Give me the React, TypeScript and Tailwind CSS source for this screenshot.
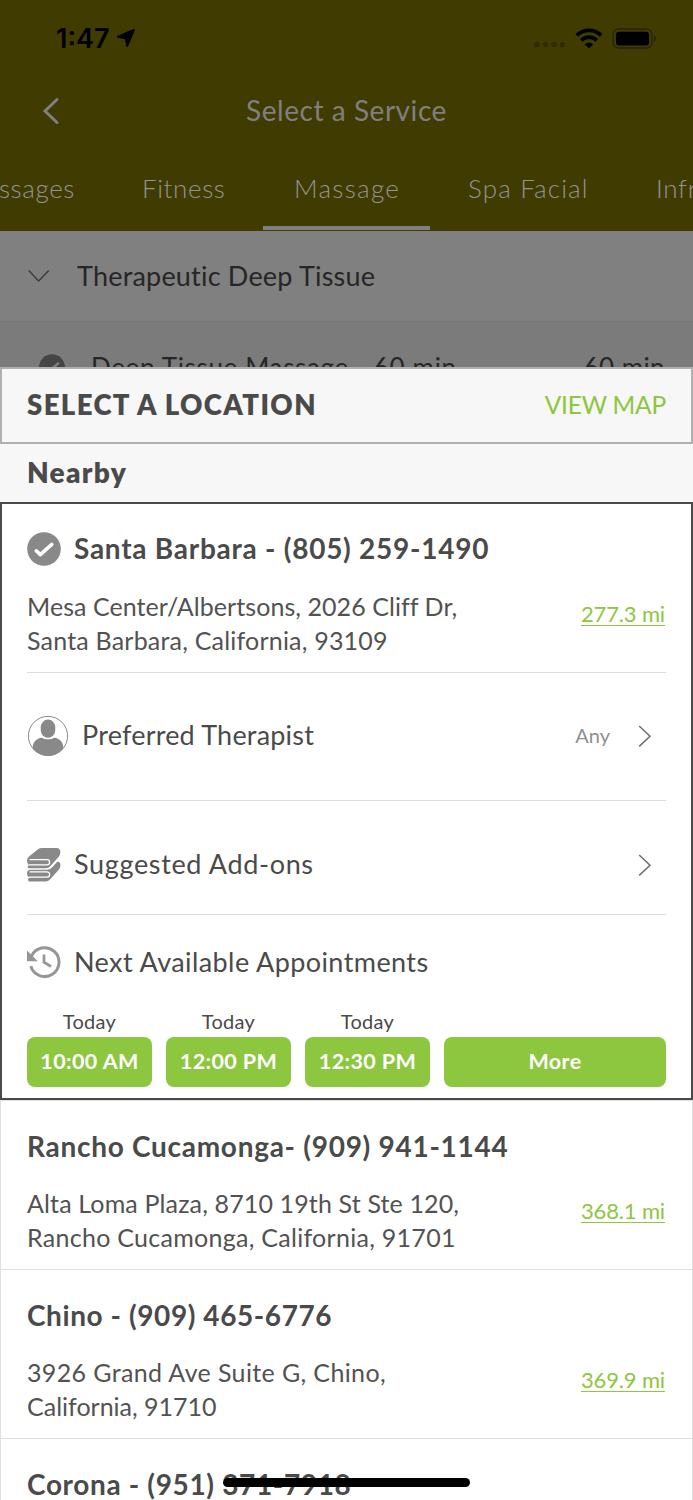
import React from "react";
import clsx from "clsx";

type Location = {
  name: string;
  address: string[];
  distance: string;
  nameClass: string;
  addressClass: string[];
};

const tabs = [
  { label: "Massages", className: "-ml-[38px] w-[113px] tracking-[0.6px]" },
  { label: "Fitness", className: "ml-[67px] w-[84px] tracking-[0.6px]" },
  { label: "Massage", className: "ml-[68px] w-[106px] tracking-[1.3px]" },
  { label: "Spa Facial", className: "ml-[68px] w-[121px] tracking-[1.15px]" },
  { label: "Infrared", className: "ml-[67px] tracking-[0.7px]" },
];

const slots = ["10:00 AM", "12:00 PM", "12:30 PM"];

const locations: Location[] = [
  {
    name: "Rancho Cucamonga- (909) 941-1144",
    address: [
      "Alta Loma Plaza, 8710 19th St Ste 120,",
      "Rancho Cucamonga, California, 91701",
    ],
    distance: "368.1 mi",
    nameClass: "tracking-[0.72px]",
    addressClass: ["tracking-[0.14px]", "tracking-[0.28px]"],
  },
  {
    name: "Chino - (909) 465-6776",
    address: ["3926 Grand Ave Suite G, Chino,", "California, 91710"],
    distance: "369.9 mi",
    nameClass: "tracking-[0.58px]",
    addressClass: ["tracking-[0.37px]", "tracking-[0px]"],
  },
];

const CheckCircle: React.FC<{ className?: string; fill: string; mark: string }> = ({
  className,
  fill,
  mark,
}) => (
  <svg viewBox="0 0 34 34" className={className} fill="none">
    <circle cx="17" cy="17" r="16.8" fill={fill} />
    <path
      d="M9.3 18.8l4 3.8L24.8 12.4"
      stroke={mark}
      strokeWidth="3.6"
      strokeLinecap="round"
      strokeLinejoin="round"
    />
  </svg>
);

const ChevronRight = () => (
  <svg width="14" height="24" viewBox="0 0 14 24" fill="none" className="shrink-0">
    <path d="M1.2 2L12 12.2 1.2 22.4" stroke="#6e6e6e" strokeWidth="1.5" />
  </svg>
);

const PersonIcon = () => (
  <svg width="42" height="42" viewBox="0 0 42 42" className="shrink-0">
    <defs>
      <clipPath id="avatar">
        <circle cx="21" cy="21" r="19.8" />
      </clipPath>
    </defs>
    <circle cx="21" cy="21" r="19.6" fill="none" stroke="#898989" />
    <rect x="13.7" y="4.6" width="14.6" height="18.2" rx="7.2" ry="8" fill="#898989" />
    <path
      clipPath="url(#avatar)"
      d="M5.5 34c0-7 3.800-10.800 9.500-11.300 3.300 2 8.700 2 12 0 5.700.5 9.500 4.300 9.500 11.300v8h-31z"
      fill="#898989"
    />
  </svg>
);

const TowelsIcon = () => (
  <svg width="34" height="34" viewBox="0 0 34 34" fill="none" className="shrink-0">
    <path
      d="M0 12.500Q0 10 2 8.500L11 1.300Q12.600 0 15 0H29.500Q33.500.2 33.400 4.500Q33.200 7 31.500 9L23.500 18Q22 20.200 19 20.300H2Q.6 20.300.6 19T2 17.300Q0 16 0 12.500Z"
      fill="#898989"
    />
    <path
      d="M33 15Q34.500 18.500 31.500 22L23.500 31Q21.800 33.400 19 33.400H2.500Q1 33.400 1 31.800T2.500 29.800Q0 28.500 0 25.500T3 21.800H20Q23.500 21.500 25 19.500L29.500 14.500Q31.500 13 33 15Z"
      fill="#898989"
    />
    <path d="M2.500 11.700H20a2.600 2.600 0 0 1 0 5.200H2" stroke="#fff" strokeWidth="1.300" />
    <path d="M2.500 23.900H20a2.600 2.600 0 0 1 0 5.200H2" stroke="#fff" strokeWidth="1.300" />
  </svg>
);

const HistoryIcon = () => (
  <svg width="34" height="34" viewBox="0 0 34 34" fill="none" className="shrink-0">
    <path d="M3.800 20.200A14.400 14.400 0 1 0 4.500 10.200" stroke="#969696" strokeWidth="3" />
    <path d="M0 4.600V15.200h10.800z" fill="#969696" />
    <path d="M17 8.600v7.600l7 4.300" stroke="#969696" strokeWidth="2.700" />
  </svg>
);

const StatusBar = () => (
  <div className="flex h-[76px] items-center pl-[56px] pr-[36px] text-black">
    <span className="font-[Inter] text-[27px] font-semibold leading-none">1:47</span>
    <svg width="20" height="20" viewBox="0 0 20 20" className="ml-[6px]">
      <path
        d="M2 8.700L17.800 2 11.200 17.800 9.800 10.200z"
        fill="#000"
        stroke="#000"
        strokeWidth="2"
        strokeLinejoin="round"
      />
    </svg>
    <div className="ml-auto flex gap-[3px] pt-[13px]">
      {[0, 1, 2, 3].map((dot) => (
        <span key={dot} className="size-[5.500px] rounded-[2px] bg-[#2f2b00]" />
      ))}
    </div>
    <svg width="28" height="21" viewBox="0 0 28 21" fill="none" className="ml-[10px]">
      <path d="M1.800 7.400a17.300 17.300 0 0 1 24.400 0" stroke="#000" strokeWidth="3.900" />
      <path d="M6.200 12.400a11 11 0 0 1 15.600 0" stroke="#000" strokeWidth="3.700" />
      <path d="M14 20.500l-4.200-4.200a6 6 0 0 1 8.400 0z" fill="#000" />
    </svg>
    <svg width="45" height="21" viewBox="0 0 45 21" fill="none" className="ml-[9px]">
      <rect x="1" y="1" width="39" height="19" rx="5.500" stroke="#262300" strokeWidth="1.300" />
      <rect x="4" y="3.700" width="33" height="13.800" rx="3" fill="#000" />
      <path d="M42 7.300c2.600 1 2.600 5.400 0 6.400z" fill="#262300" />
    </svg>
  </div>
);

const Distance: React.FC<{ children: React.ReactNode }> = ({ children }) => (
  <a className="mr-px mt-[9px] block h-[28px] border-b-[1.500px] border-[#8dc63f] text-[22px] leading-[31px] tracking-[-0.15px] text-[#8dc63f]">
    {children}
  </a>
);

const LocationRow: React.FC<{ location: Location }> = ({ location }) => (
  <div className="h-[169px] border-x border-t border-[#dfdfdf] px-[26px]">
    <h3
      className={clsx(
        "whitespace-nowrap pt-[25px] text-[28px] font-bold leading-[40px]",
        location.nameClass
      )}
    >
      {location.name}
    </h3>
    <div className="mt-[20px] flex justify-between">
      <div className="text-[25px] leading-[34px] text-[#525252]">
        {location.address.map((line, i) => (
          <p key={line} className={clsx("whitespace-nowrap", location.addressClass[i])}>
            {line}
          </p>
        ))}
      </div>
      <Distance>{location.distance}</Distance>
    </div>
  </div>
);

export default function App() {
  return (
    <div className="relative h-[1500px] w-[693px] overflow-hidden bg-white font-[Lato,'Liberation_Sans',sans-serif] text-[#4a4a4a]">
      <header className="h-[231px] overflow-hidden bg-[#403b00] text-[#807f80]">
        <StatusBar />
        <div className="flex h-[70px] items-center pl-[42px]">
          <svg width="18" height="28" viewBox="0 0 18 28" fill="none">
            <path
              d="M15 2.500L3 14l12 11.500"
              stroke="#807f80"
              strokeWidth="3"
              strokeLinecap="round"
            />
          </svg>
          <h1 className="ml-[186px] whitespace-nowrap pb-[2px] text-[28px] leading-none tracking-[0.55px]">
            Select a Service
          </h1>
        </div>
        <nav className="flex h-[80px] items-center whitespace-nowrap pt-[4px] text-[26px] font-light leading-none text-[#949394]">
          {tabs.map((tab) => (
            <span key={tab.label} className={clsx("shrink-0", tab.className)}>
              {tab.label}
            </span>
          ))}
        </nav>
        <div className="ml-[263px] h-[3.500px] w-[167px] bg-[#807f80]" />
      </header>

      {/* services underneath the sheet */}
      <div className="flex h-[90px] items-center bg-[#808080] pl-[28px] text-[27px] leading-none text-[#262626]">
        <svg width="22" height="14" viewBox="0 0 22 14" fill="none">
          <path d="M.7 1.500L10.700 12 20.700 1.500" stroke="#3c3c3c" strokeWidth="1.400" />
        </svg>
        <span className="ml-[27px] pb-[2px] tracking-[0.2px]">Therapeutic Deep Tissue</span>
      </div>
      <div className="h-[46px] overflow-hidden border-t border-[#757575] bg-[#7b7b7b] text-[#262626]">
        <div className="flex h-[90px] items-center pl-[39px] pr-[28px] text-[26px] leading-none">
          <CheckCircle className="size-[26px]" fill="#454545" mark="#7b7b7b" />
          <span className="ml-[26px] tracking-[0.65px]">Deep Tissue Massage - 60 min</span>
          <span className="ml-auto tracking-[0.4px]">60 min</span>
        </div>
      </div>

      <section className="bg-white">
        <div className="flex h-[77px] items-center justify-between border-2 border-[#b0b0b0] bg-[#f7f7f7] px-[25px] leading-none">
          <h2 className="pb-[2px] text-[27.500px] font-extrabold tracking-[1.400px]">
            SELECT A LOCATION
          </h2>
          <a className="text-[24.500px] font-normal tracking-[-0.2px] text-[#8dc63f]">VIEW MAP</a>
        </div>
        <div className="flex h-[58px] items-center bg-[#f7f7f7] pb-[2px] pl-[27px] text-[28px] font-extrabold leading-none tracking-[1.3px]">
          Nearby
        </div>

        <div className="h-[598px] border-2 border-[#4a4a4a] px-[25px]">
          <div className="flex h-[85px] items-center pt-[4px]">
            <CheckCircle className="size-[34px]" fill="#898989" mark="#fff" />
            <h3 className="ml-[13px] whitespace-nowrap pb-[2px] text-[28px] font-bold leading-none tracking-[0.74px]">
              Santa Barbara - (805) 259-1490
            </h3>
          </div>
          <div className="flex h-[84px] justify-between border-b-[1.500px] border-[#dcdcdc]">
            <div className="text-[25px] leading-[34px] text-[#525252]">
              <p className="tracking-[0.06px]">Mesa Center/Albertsons, 2026 Cliff Dr,</p>
              <p className="tracking-[0.2px]">Santa Barbara, California, 93109</p>
            </div>
            <Distance>277.3 mi</Distance>
          </div>

          <div className="flex h-[128px] items-center border-b-[1.500px] border-[#dcdcdc] pb-[2px] pr-[14px] leading-none">
            <PersonIcon />
            <span className="ml-[13px] pb-[2px] text-[27px] tracking-[0.2px]">
              Preferred Therapist
            </span>
            <span className="ml-auto mr-[28px] pb-[2px] text-[20px] text-[#8f8f8f]">Any</span>
            <ChevronRight />
          </div>

          <div className="flex h-[114px] items-center border-b-[1.500px] border-[#dcdcdc] pr-[14px] pt-[14px] leading-none">
            <TowelsIcon />
            <span className="ml-[13px] pb-[3px] text-[27px] tracking-[0.66px]">
              Suggested Add-ons
            </span>
            <span className="ml-auto">
              <ChevronRight />
            </span>
          </div>

          <div className="flex h-[94px] items-center pt-[2px] leading-none">
            <HistoryIcon />
            <span className="ml-[13px] pb-[4px] text-[27px] tracking-[0.42px]">
              Next Available Appointments
            </span>
          </div>

          <div className="flex items-end gap-[14px]">
            {slots.map((slot) => (
              <div key={slot} className="w-[125px] shrink-0 text-center">
                <p className="h-[28px] text-[20px] leading-[24px] tracking-[0.3px]">Today</p>
                <button className="block h-[50px] w-full rounded-[8px] bg-[#8dc63f] text-[21.500px] font-bold leading-none tracking-[0.4px] text-white">
                  {slot}
                </button>
              </div>
            ))}
            <button className="h-[50px] w-[222px] shrink-0 rounded-[8px] bg-[#8dc63f] text-[21.500px] font-bold leading-none tracking-[0.4px] text-white">
              More
            </button>
          </div>
        </div>

        {locations.map((location) => (
          <LocationRow key={location.name} location={location} />
        ))}
        <div className="h-[62px] border-x border-t border-[#dfdfdf] px-[26px]">
          <h3 className="pt-[25px] text-[28px] font-bold leading-[40px] tracking-[0.65px]">
            Corona - (951) 371-7918
          </h3>
        </div>
      </section>

      {/* home indicator */}
      <div className="absolute bottom-[13px] left-[223px] h-[9px] w-[247px] rounded-full bg-black" />
    </div>
  );
}
